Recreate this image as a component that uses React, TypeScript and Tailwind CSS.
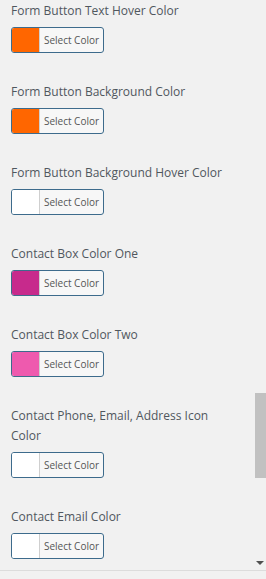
const fields = [
  { label: "Form Button Text Hover Color", color: "#ff6600" },
  { label: "Form Button Background Color", color: "#ff6600" },
  { label: "Form Button Background Hover Color", color: "#ffffff" },
  { label: "Contact Box Color One", color: "#c72a8c" },
  { label: "Contact Box Color Two", color: "#ee5aae" },
  { label: "Contact Phone, Email, Address Icon Color", color: "#ffffff" },
  { label: "Contact Email Color", color: "#ffffff" },
];

function ColorButton({ color }: { color: string }) {
  return (
    <button className="flex h-[26px] w-[93px] overflow-hidden rounded-[3px] border border-[#3d6b8c] bg-[#f7f7f7]">
      <span className="h-full w-[28px] border-r border-[#cfcfcf]" style={{ backgroundColor: color }} />
      <span className="flex flex-1 items-center justify-center text-[10px] text-[#555]">Select Color</span>
    </button>
  );
}

export default function App() {
  return (
    <div className="flex h-[579px] w-[266px] flex-col overflow-hidden bg-[#f1f1f1] font-['Open_Sans',sans-serif]">
      <div className="flex flex-1">
        {/* settings list */}
        <div className="flex flex-1 flex-col gap-[29px] pl-[11px] pr-[14px] pt-[1px]">
          {fields.map((f) => (
            <div key={f.label} className="flex flex-col gap-[6px]">
              <label className="text-[12px] leading-[20px] text-[#50575e]">{f.label}</label>
              <ColorButton color={f.color} />
            </div>
          ))}
        </div>

        {/* scrollbar */}
        <div className="flex w-[12px] flex-col items-center">
          <div className="mt-[393px] h-[85px] w-[11px] bg-[#c1c1c1]" />
          <div className="mt-auto mb-[5px] h-0 w-0 border-x-[4px] border-t-[4px] border-x-transparent border-t-[#505050]" />
        </div>
      </div>
      <div className="h-[9px] border-t border-[#dcdcdc]" />
    </div>
  );
}
